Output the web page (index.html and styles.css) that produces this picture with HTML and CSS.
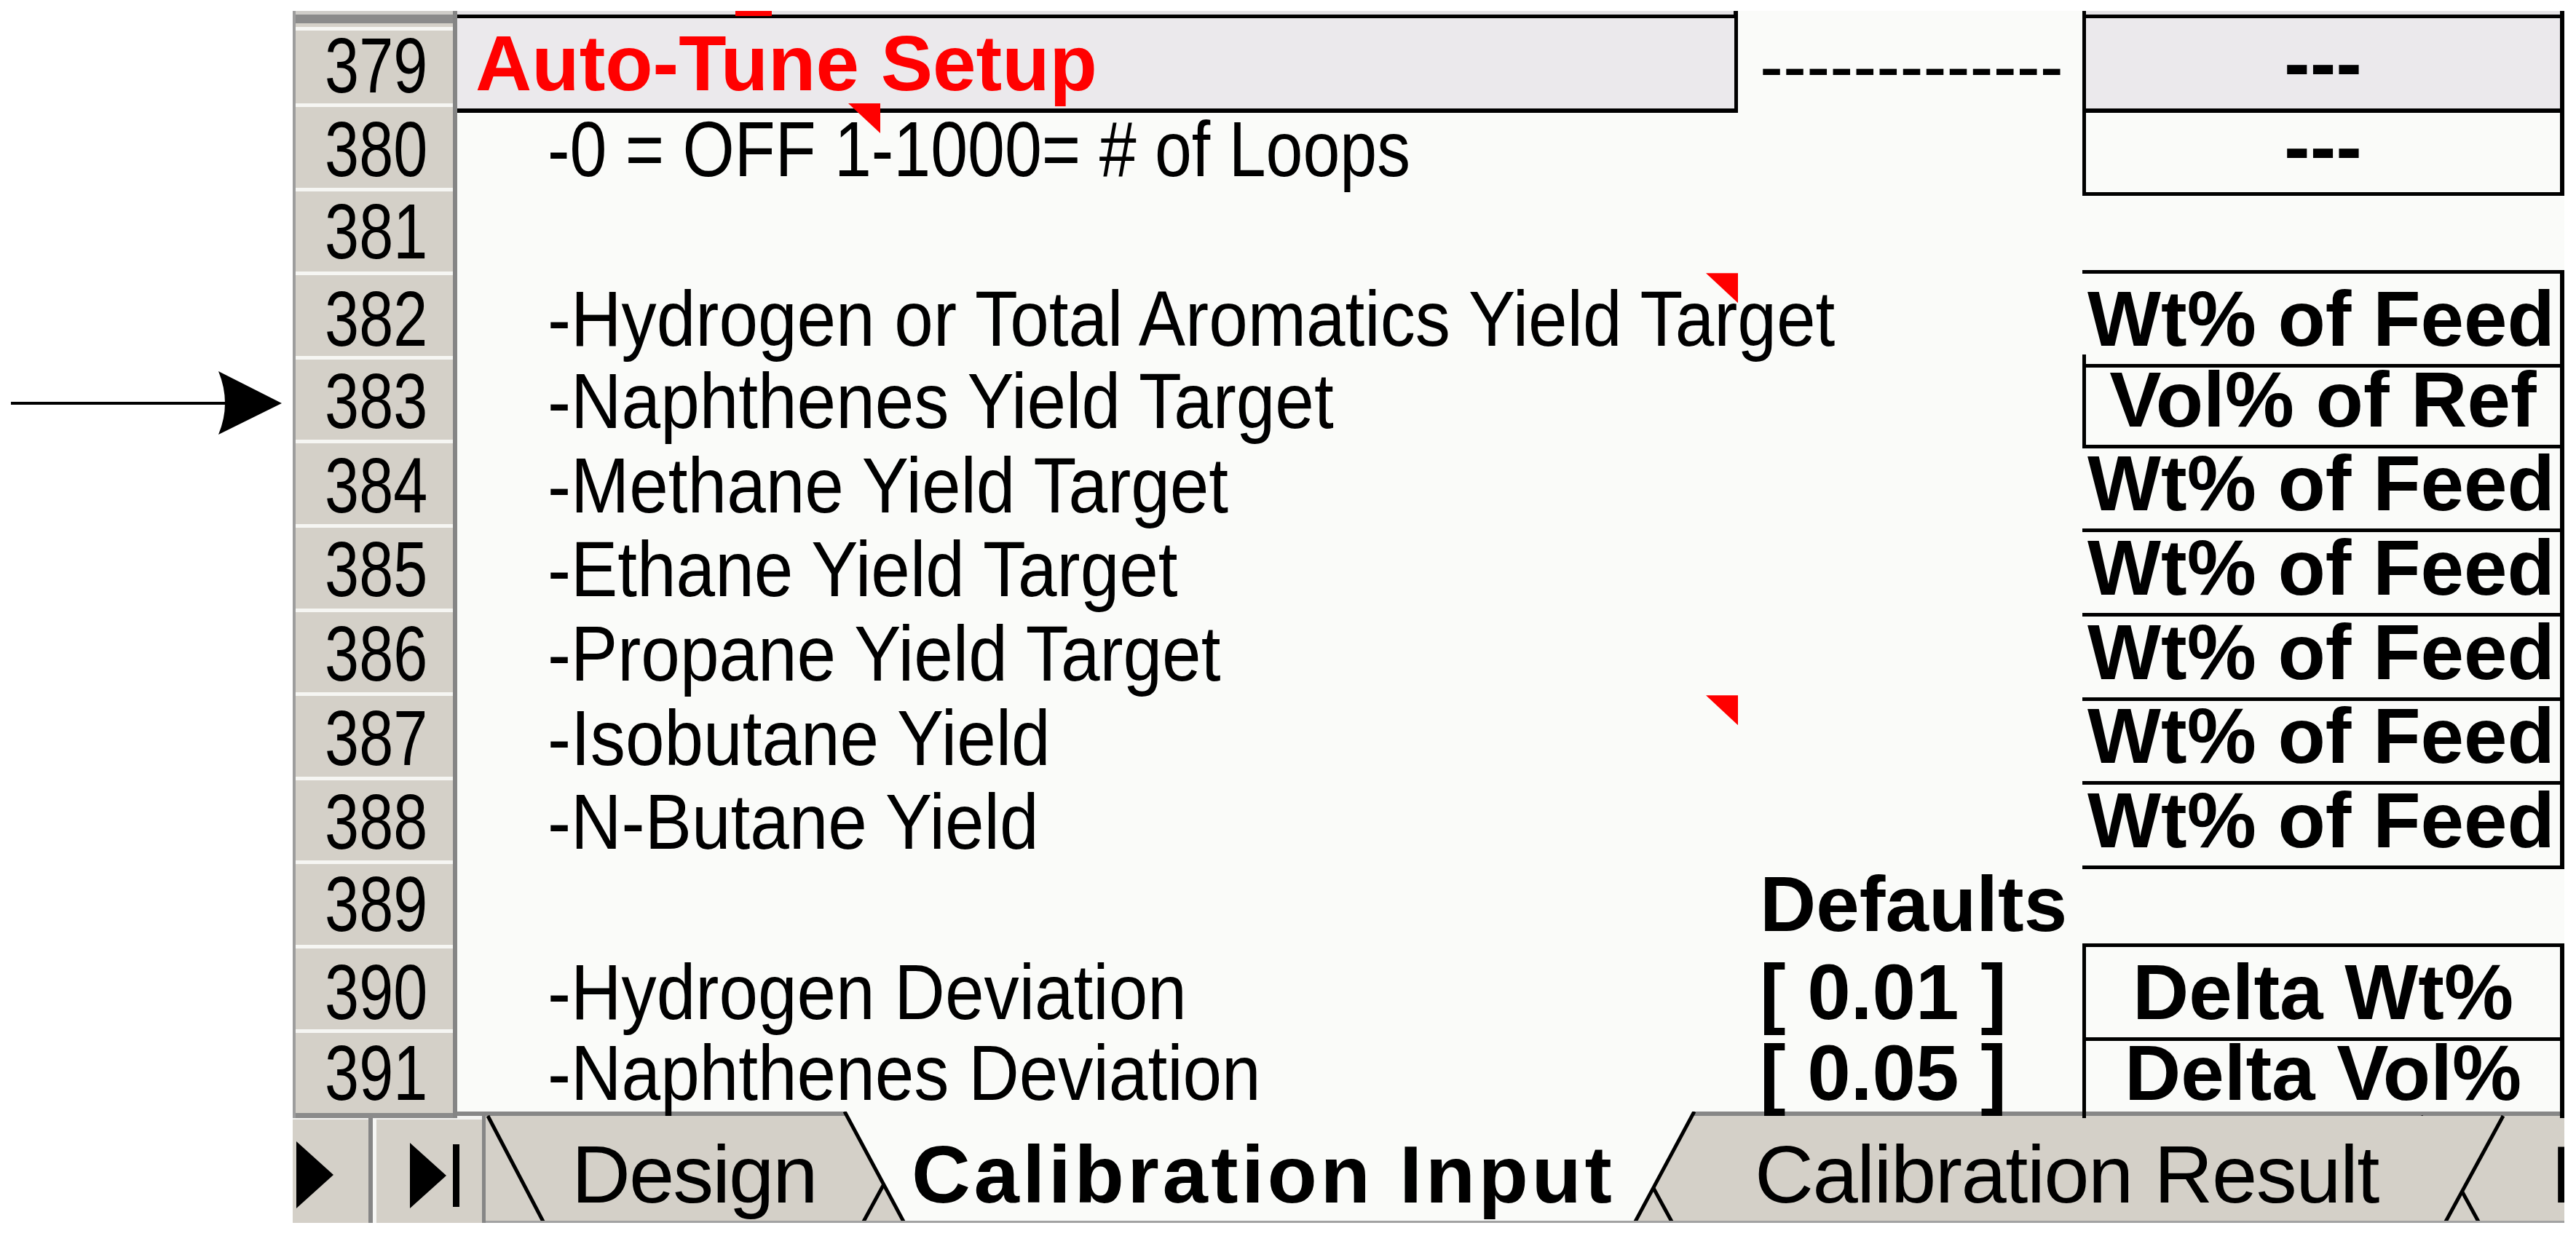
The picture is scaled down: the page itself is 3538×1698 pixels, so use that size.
FILE: index.html
```html
<!DOCTYPE html>
<html lang="en">
<head>
<meta charset="utf-8">
<title>Calibration Input</title>
<link rel="stylesheet" href="styles.css">
</head>
<body>
<div class="page">
  <div class="gutter">
    <svg class="pointer" width="402" height="100" viewBox="0 0 402 100">
      <line x1="15" y1="44" x2="312" y2="44" stroke="#000" stroke-width="4"/>
      <path d="M387 44 L300 0 Q318 44 300 87 Z" fill="#000"/>
    </svg>
  </div>
  <div class="book">
    <div class="grid">
      <div class="row r378">
        <div class="rh"></div>
        <div class="c cap box-r"><i class="flag-top"></i></div>
        <div class="c"></div>
        <div class="c cap box-l box-r"></div>
      </div>
      <div class="row r379">
        <div class="rh"><span class="rn">379</span></div>
        <div class="c head"><span class="b red">Auto-Tune Setup</span></div>
        <div class="c cm"><span class="t">-------------</span></div>
        <div class="c cd shade box-l box-r box-b6"><span class="b">---</span></div>
      </div>
      <div class="row">
        <div class="rh"><span class="rn">380</span></div>
        <div class="c ind"><span class="t tight">-0 = OFF 1-1000= # of Loops</span><i class="flag flag-a"></i></div>
        <div class="c"></div>
        <div class="c cd box-l box-r box-b"><span class="b">---</span></div>
      </div>
      <div class="row">
        <div class="rh"><span class="rn">381</span></div>
        <div class="c"></div>
        <div class="c"></div>
        <div class="c"></div>
      </div>
      <div class="row">
        <div class="rh"><span class="rn">382</span></div>
        <div class="c ind"><span class="t">-Hydrogen or Total Aromatics Yield Target</span><i class="flag flag-b"></i></div>
        <div class="c"></div>
        <div class="c cd box-t box-r box-b"><span class="b">Wt% of Feed</span></div>
      </div>
      <div class="row">
        <div class="rh"><span class="rn">383</span></div>
        <div class="c ind"><span class="t">-Naphthenes Yield Target</span></div>
        <div class="c"></div>
        <div class="c cd box-l box-r box-b"><span class="b">Vol% of Ref</span></div>
      </div>
      <div class="row">
        <div class="rh"><span class="rn">384</span></div>
        <div class="c ind"><span class="t">-Methane Yield Target</span></div>
        <div class="c"></div>
        <div class="c cd box-r box-b"><span class="b">Wt% of Feed</span></div>
      </div>
      <div class="row">
        <div class="rh"><span class="rn">385</span></div>
        <div class="c ind"><span class="t">-Ethane Yield Target</span></div>
        <div class="c"></div>
        <div class="c cd box-r box-b"><span class="b">Wt% of Feed</span></div>
      </div>
      <div class="row">
        <div class="rh"><span class="rn">386</span></div>
        <div class="c ind"><span class="t">-Propane Yield Target</span></div>
        <div class="c"></div>
        <div class="c cd box-r box-b"><span class="b">Wt% of Feed</span></div>
      </div>
      <div class="row">
        <div class="rh"><span class="rn">387</span></div>
        <div class="c ind"><span class="t">-Isobutane Yield</span><i class="flag flag-c"></i></div>
        <div class="c"></div>
        <div class="c cd box-r box-b"><span class="b">Wt% of Feed</span></div>
      </div>
      <div class="row">
        <div class="rh"><span class="rn">388</span></div>
        <div class="c ind"><span class="t">-N-Butane Yield</span></div>
        <div class="c"></div>
        <div class="c cd box-r box-b"><span class="b">Wt% of Feed</span></div>
      </div>
      <div class="row">
        <div class="rh"><span class="rn">389</span></div>
        <div class="c"></div>
        <div class="c cm"><span class="b">Defaults</span></div>
        <div class="c"></div>
      </div>
      <div class="row">
        <div class="rh"><span class="rn">390</span></div>
        <div class="c ind"><span class="t">-Hydrogen Deviation</span></div>
        <div class="c cm"><span class="b">[ 0.01 ]</span></div>
        <div class="c cd box-t box-l box-r box-b"><span class="b">Delta Wt%</span></div>
      </div>
      <div class="row">
        <div class="rh"><span class="rn">391</span></div>
        <div class="c ind"><span class="t">-Naphthenes Deviation</span></div>
        <div class="c cm"><span class="b">[ 0.05 ]</span></div>
        <div class="c cd box-l box-r"><span class="b">Delta Vol%</span></div>
      </div>
    </div>
    <div class="tabbar">
      <div class="navbtn nav-next">
        <svg width="51" height="92" viewBox="0 0 51 92"><path d="M0 0 L51 46 L0 92 Z" fill="#000"/></svg>
      </div>
      <div class="navbtn nav-last">
        <svg width="70" height="90" viewBox="0 0 70 90"><path d="M0 0 L50 45 L0 90 Z" fill="#000"/><rect x="59" y="2" width="9" height="86" fill="#000"/></svg>
      </div>
      <svg class="tabs" width="2855" height="153" viewBox="0 0 2855 153">
        <rect x="0" y="0" width="2855" height="153" fill="#d4d0c8"/>
        <rect x="0" y="0" width="2855" height="6" fill="#878787"/>
        <polygon points="2658,6 2738,153 2860,153 2860,6" fill="#d4d0c8"/>
        <line x1="2658" y1="6" x2="2738" y2="153" class="edge"/>
        <text x="2837" y="125" class="tab-label">F</text>
        <polygon points="1550,6 1630,153 2691,153 2771,6" fill="#d4d0c8"/>
        <line x1="1550" y1="6" x2="1630" y2="153" class="edge"/>
        <line x1="2771" y1="6" x2="2691" y2="153" class="edge"/>
        <text x="1743" y="125" class="tab-label result">Calibration Result</text>
        <polygon points="3,6 80,153 518,153 598,6" fill="#d4d0c8"/>
        <line x1="3" y1="6" x2="80" y2="153" class="edge"/>
        <line x1="598" y1="6" x2="518" y2="153" class="edge"/>
        <text x="118" y="125" class="tab-label design">Design</text>
        <polygon points="493,0 575,153 1578,153 1660,0" fill="#fafbf9"/>
        <line x1="493" y1="0" x2="575" y2="153" class="edge"/>
        <line x1="1660" y1="0" x2="1578" y2="153" class="edge"/>
        <text x="585" y="125" class="tab-label active">Calibration Input</text>
        <rect x="0" y="150" width="2855" height="3" fill="#a2a2a2"/>
      </svg>
    </div>
  </div>
</div>
</body>
</html>
```

FILE: styles.css
```css
* { box-sizing: border-box; margin: 0; padding: 0; }
html, body { background: #ffffff; }
body {
  font-family: "Liberation Sans", Arial, sans-serif;
  color: #000;
}
.page {
  display: flex;
  width: 3538px;
  height: 1698px;
  overflow: hidden;
}
.gutter {
  width: 402px;
  flex: none;
  padding-top: 510px;
}
.pointer { display: block; }
.book {
  width: 3120px;
  flex: none;
  padding-top: 15px;
  display: flex;
  flex-direction: column;
}
.grid {
  display: flex;
  flex-direction: column;
  background: #fafbf9;
}
.row {
  display: grid;
  grid-template-columns: 226px 1759px 473px 662px;
  height: 115.6px;
  font-size: 107px;
  position: relative;
}
.r378 { height: 10px; }
.r379 { height: 115px; }

/* row headers */
.rh {
  display: flex;
  align-items: center;
  justify-content: center;
  border-left: 4px solid #9d9d9d;
  border-right: 6px solid #858585;
  background: linear-gradient(to bottom,
    #d4d0c8 0 2px, #f6f6f3 2px 7px, #d4d0c8 7px calc(100% - 7px), #8b8b8b calc(100% - 7px));
  white-space: nowrap;
}
.r378 .rh {
  background: linear-gradient(to bottom, #cfcdc9 0 5px, #8b8b8b 5px);
}
.r379 .rh {
  background: linear-gradient(to bottom,
    #8b8b8b 0 7px, #d4d0c8 7px 12px, #f6f6f3 12px 17px, #d4d0c8 17px calc(100% - 7px), #8b8b8b calc(100% - 7px));
}
.rn {
  display: inline-block;
  transform: scaleX(0.79);
  padding-left: 6px;
}

/* cells */
.c {
  display: flex;
  align-items: center;
  white-space: nowrap;
  position: relative;
  min-width: 0;
}
.cap {
  background: #e5e3e6;
  border-bottom: 5px solid #000;
}
.head {
  background: #ebe9ec;
  border-right: 5px solid #000;
  border-bottom: 6px solid #000;
  padding-left: 25px;
}
.ind { padding-left: 124px; }
.cm { padding-left: 30px; }
.cd { justify-content: center; }
.shade { background: #ebe9ec; }
.box-l { border-left: 5px solid #000; }
.box-r { border-right: 6px solid #000; }
.box-t { border-top: 5px solid #000; }
.box-b { border-bottom: 5px solid #000; }
.box-b6 { border-bottom: 6px solid #000; }

.t {
  display: inline-block;
  transform: scaleX(0.9);
  transform-origin: 0 50%;
}
.t.tight { transform: scaleX(0.855); }
.b { font-weight: 700; }
.red { color: #ff0000; }

/* comment indicators */
.flag {
  position: absolute;
  width: 44px;
  height: 41px;
  background: #ff0000;
  clip-path: polygon(0 0, 100% 0, 100% 100%);
}
.flag-a { left: 537px; top: 2px; }
.flag-b { left: 1715px; top: 4px; }
.flag-c { left: 1715px; top: 6px; }
.flag-top {
  position: absolute;
  left: 382px;
  top: 0;
  width: 50px;
  height: 7px;
  background: #ff0000;
  z-index: 2;
}

/* sheet tab bar */
.tabbar {
  display: flex;
  height: 153px;
  background: #d4d0c8;
}
.navbtn {
  flex: none;
  height: 153px;
  border-top: 6px solid #878787;
  background: #d4d0c8;
  box-shadow: inset 0 5px 0 #f3f3f1;
}
.navbtn svg { display: block; }
.nav-next {
  width: 110px;
  border-right: 6px solid #868686;
  padding: 35px 0 0 5px;
}
.nav-last {
  width: 155px;
  border-left: 5px solid #f6f6f4;
  border-right: 5px solid #868686;
  padding: 37px 0 0 46px;
}
.tabs {
  display: block;
  flex: none;
}
.edge {
  stroke: #000;
  stroke-width: 5;
}
.tab-label {
  font-family: "Liberation Sans", Arial, sans-serif;
  font-size: 112px;
  fill: #000;
}
.tab-label.design { letter-spacing: -2px; }
.tab-label.result { letter-spacing: -1.5px; }
.tab-label.active { font-weight: 700; letter-spacing: 4.5px; }
```
